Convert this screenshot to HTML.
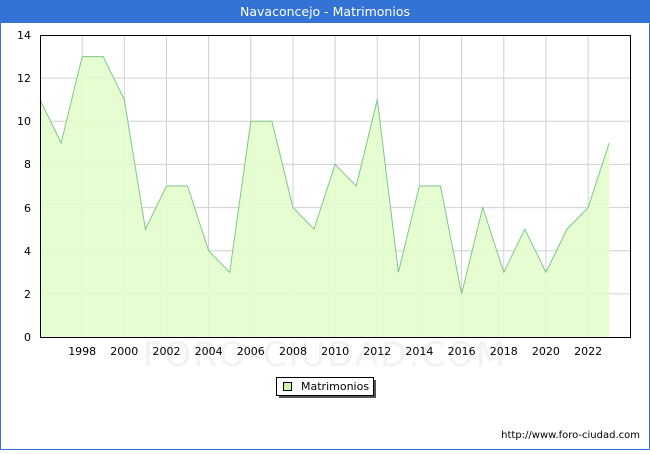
<!DOCTYPE html>
<html><head><meta charset="utf-8"><style>
html,body{margin:0;padding:0;background:#fff;}
body{width:650px;height:450px;overflow:hidden;font-family:"DejaVu Sans","Liberation Sans",sans-serif;}
</style></head><body>
<svg width="650" height="450" xmlns="http://www.w3.org/2000/svg" font-family="DejaVu Sans, Liberation Sans, sans-serif">
<rect x="0.5" y="0.5" width="649" height="449" fill="#fff" stroke="#3373d6"/>
<rect x="0" y="0" width="650" height="23" fill="#3373d6"/>
<text x="325" y="16" fill="#fff" font-size="12.5" text-anchor="middle">Navaconcejo - Matrimonios</text>
<text x="325" y="366" fill="#f2f2f2" font-size="34" text-anchor="middle" letter-spacing="2">FORO-CIUDAD.COM</text>
<g stroke="#d0d0d0" stroke-width="1">
<line x1="40" y1="293.9" x2="630" y2="293.9"/><line x1="40" y1="250.7" x2="630" y2="250.7"/>
<line x1="40" y1="207.6" x2="630" y2="207.6"/><line x1="40" y1="164.4" x2="630" y2="164.4"/>
<line x1="40" y1="121.3" x2="630" y2="121.3"/><line x1="40" y1="78.1" x2="630" y2="78.1"/>
<line x1="82.2" y1="35" x2="82.2" y2="337"/><line x1="124.3" y1="35" x2="124.3" y2="337"/>
<line x1="166.5" y1="35" x2="166.5" y2="337"/><line x1="208.6" y1="35" x2="208.6" y2="337"/>
<line x1="250.8" y1="35" x2="250.8" y2="337"/><line x1="293" y1="35" x2="293" y2="337"/>
<line x1="335.1" y1="35" x2="335.1" y2="337"/><line x1="377.3" y1="35" x2="377.3" y2="337"/>
<line x1="419.4" y1="35" x2="419.4" y2="337"/><line x1="461.6" y1="35" x2="461.6" y2="337"/>
<line x1="503.8" y1="35" x2="503.8" y2="337"/><line x1="545.9" y1="35" x2="545.9" y2="337"/>
<line x1="588.1" y1="35" x2="588.1" y2="337"/>
</g>
<polygon fill="#e3fccc" fill-opacity="0.9" points="40,337 40,99.7 61.1,142.9 82.2,56.6 103.2,56.6 124.3,99.7 145.4,229.1 166.5,186 187.6,186 208.6,250.7 229.7,272.3 250.8,121.3 271.9,121.3 293,207.6 314,229.1 335.1,164.4 356.2,186 377.3,99.7 398.4,272.3 419.4,186 440.5,186 461.6,293.9 482.7,207.6 503.8,272.3 524.8,229.1 545.9,272.3 567,229.1 588.1,207.6 609.2,142.9 609.2,337"/>
<polyline fill="none" stroke="#7ec88a" stroke-width="1" points="40,99.7 61.1,142.9 82.2,56.6 103.2,56.6 124.3,99.7 145.4,229.1 166.5,186 187.6,186 208.6,250.7 229.7,272.3 250.8,121.3 271.9,121.3 293,207.6 314,229.1 335.1,164.4 356.2,186 377.3,99.7 398.4,272.3 419.4,186 440.5,186 461.6,293.9 482.7,207.6 503.8,272.3 524.8,229.1 545.9,272.3 567,229.1 588.1,207.6 609.2,142.9"/>
<rect x="40.5" y="35.5" width="590" height="302" fill="none" stroke="#000"/>
<g font-size="11" fill="#000" text-anchor="end">
<text x="31" y="341">0</text><text x="31" y="298">2</text><text x="31" y="255">4</text>
<text x="31" y="212">6</text><text x="31" y="168">8</text><text x="31" y="125">10</text>
<text x="31" y="82">12</text><text x="31" y="39">14</text>
</g>
<g font-size="11" fill="#000" text-anchor="middle">
<text x="82.2" y="355">1998</text><text x="124.3" y="355">2000</text><text x="166.5" y="355">2002</text>
<text x="208.6" y="355">2004</text><text x="250.8" y="355">2006</text><text x="293" y="355">2008</text>
<text x="335.1" y="355">2010</text><text x="377.3" y="355">2012</text><text x="419.4" y="355">2014</text>
<text x="461.6" y="355">2016</text><text x="503.8" y="355">2018</text><text x="545.9" y="355">2020</text>
<text x="588.1" y="355">2022</text>
</g>
<rect x="279" y="380" width="97" height="18" fill="#555"/>
<rect x="276.5" y="377.5" width="97" height="18" fill="#fff" stroke="#000"/>
<rect x="283.5" y="382.5" width="8" height="8" fill="#ccf5a8" stroke="#000"/>
<text x="301" y="390" font-size="11" fill="#000">Matrimonios</text>
<text x="640" y="438" font-size="10" fill="#000" text-anchor="end">http://www.foro-ciudad.com</text>
</svg>
</body></html>
